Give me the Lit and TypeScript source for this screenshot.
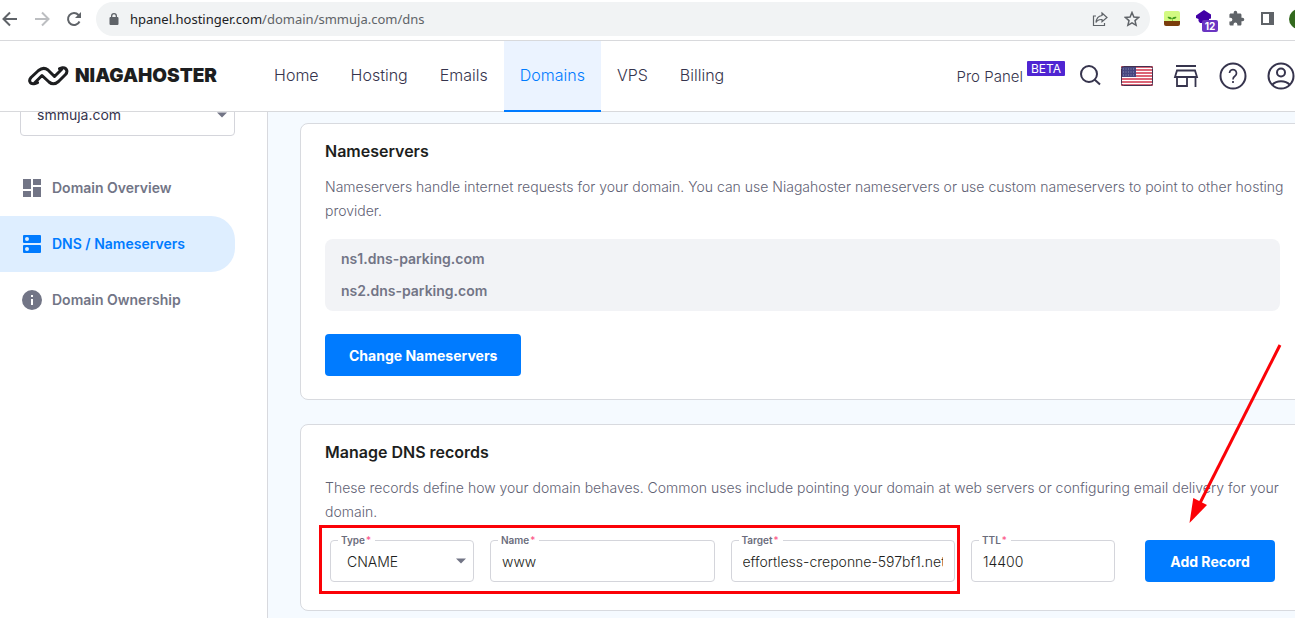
import { LitElement, html, css } from "lit";
import { customElement, property } from "lit/decorators.js";

@customElement("dns-field")
class DnsField extends LitElement {
  @property() label = "";
  @property() value = "";
  @property({ type: Boolean }) dropdown = false;

  static styles = css`
    :host {
      display: block;
      min-width: 0;
    }
    .field {
      position: relative;
      height: 42px;
      box-sizing: border-box;
      border: 1px solid #d4d5db;
      border-radius: 4px;
      display: flex;
      align-items: center;
      padding: 0 11px;
      background: #fff;
    }
    .field.dropdown {
      padding: 0 0 0 16px;
    }
    .label {
      position: absolute;
      top: -7px;
      left: 7px;
      padding: 0 4px 0 3px;
      background: #fff;
      font-size: 10px;
      line-height: 12px;
      font-weight: 600;
      color: #6b6d7c;
      white-space: nowrap;
    }
    .star {
      margin-left: 1px;
      font-weight: 400;
      color: #fc5185;
    }
    .control {
      flex: 1;
      min-width: 0;
      width: 100%;
      height: 100%;
      margin: 0;
      padding: 0;
      border: 0;
      outline: 0;
      background: transparent;
      appearance: none;
      font: inherit;
      font-size: 14px;
      font-weight: 300;
      color: #1d1e20;
    }
    .caret {
      position: absolute;
      right: 7px;
      pointer-events: none;
    }
  `;

  render() {
    return html`<div class="field ${this.dropdown ? "dropdown" : ""}">
      ${this.dropdown
        ? html`<select id="control" class="control">
              <option>${this.value}</option>
            </select>
            <svg class="caret" width="10" height="6" viewBox="0 0 10 6">
              <path d="M0 0.5h10L5 5.5z" fill="#727586" />
            </svg>`
        : html`<input id="control" class="control" type="text" .value=${this.value} />`}
      <label class="label" for="control">${this.label}<span class="star">*</span></label>
    </div>`;
  }
}

const icon = (name: string) => {
  switch (name) {
    case "overview":
      return html`<svg width="20" height="20" viewBox="0 0 20 20" fill="currentColor">
        <path d="M1 1h8v10H1zM11 1h8v6h-8zM11 9h8v10h-8zM1 13h8v6H1z" />
      </svg>`;
    case "dns":
      return html`<svg width="20" height="20" viewBox="0 0 20 20" fill="currentColor">
        <path
          fill-rule="evenodd"
          d="M2 1h16a1 1 0 0 1 1 1v6a1 1 0 0 1-1 1H2a1 1 0 0 1-1-1V2a1 1 0 0 1 1-1zM5 3a2 2 0 1 0 0 4a2 2 0 0 0 0-4zM2 11h16a1 1 0 0 1 1 1v6a1 1 0 0 1-1 1H2a1 1 0 0 1-1-1v-6a1 1 0 0 1 1-1zM5 13a2 2 0 1 0 0 4a2 2 0 0 0 0-4z"
        />
      </svg>`;
    default:
      return html`<svg width="20" height="20" viewBox="0 0 20 20" fill="currentColor">
        <path fill-rule="evenodd" d="M10 0a10 10 0 1 0 0 20a10 10 0 0 0 0-20zM9 5h2v2H9zM9 9h2v6H9z" />
      </svg>`;
  }
};

@customElement("app-root")
class AppRoot extends LitElement {
  private nav = ["Home", "Hosting", "Emails", "Domains", "VPS", "Billing"];
  private side = [
    { label: "Domain Overview", icon: "overview" },
    { label: "DNS / Nameservers", icon: "dns" },
    { label: "Domain Ownership", icon: "info" },
  ];

  static styles = css`
    :host {
      display: flex;
      flex-direction: column;
      height: 100vh;
      overflow: hidden;
      font-family: "Inter", "Liberation Sans", sans-serif;
      font-size: 14px;
      color: #36344d;
      background: #fff;
    }
    * {
      box-sizing: border-box;
    }
    svg {
      display: block;
      flex: none;
    }
    button {
      font-family: inherit;
      border: 0;
      margin: 0;
      padding: 0;
      background: none;
      color: inherit;
      cursor: pointer;
    }
    a {
      color: inherit;
      text-decoration: none;
    }

    .browser {
      flex: none;
      height: 41px;
      display: flex;
      align-items: center;
      padding: 0 0 3px 2px;
      border-bottom: 1px solid #d8d9dc;
      color: #5f6368;
    }
    .tools {
      display: flex;
      gap: 16px;
      margin-right: 14px;
    }
    .faded {
      color: #bcbec1;
    }
    .omnibox {
      flex: 1;
      min-width: 0;
      height: 34px;
      display: flex;
      align-items: center;
      padding: 0 10px 0 12px;
      border-radius: 17px;
      background: #f1f3f4;
    }
    .url {
      flex: 1;
      min-width: 0;
      margin-left: 10px;
      font-family: "Noto Sans", "Open Sans", sans-serif;
      font-size: 13px;
      line-height: 20px;
      color: #5f6368;
      white-space: nowrap;
    }
    .host {
      color: #202124;
    }
    .omni-actions {
      display: flex;
      gap: 16px;
    }
    .extensions {
      display: flex;
      align-items: center;
      margin-left: 14px;
      gap: 15px;
    }
    .ext-purple {
      position: relative;
    }
    .count {
      position: absolute;
      left: 6px;
      top: 10px;
      width: 16px;
      height: 12px;
      border-radius: 2px;
      background: #6a35c2;
      color: #fff;
      font-size: 10px;
      line-height: 12px;
      font-weight: 700;
      text-align: center;
    }
    .avatar {
      flex: none;
      width: 20px;
      height: 20px;
      border-radius: 50%;
      background: #33691e;
      margin-right: -14px;
      margin-left: -1px;
    }

    .header {
      flex: none;
      height: 71px;
      display: flex;
      align-items: stretch;
      border-bottom: 1px solid #d8d9dc;
    }
    .brand {
      display: flex;
      align-items: center;
      gap: 6px;
      margin-left: 28px;
      margin-right: 41px;
      font-weight: 900;
      font-size: 19px;
      line-height: 24px;
      color: #1d1e20;
    }
    .nav {
      flex: 1;
      display: flex;
    }
    .nav a {
      display: flex;
      align-items: center;
      padding: 0 16px 2px;
      margin-bottom: -1px;
      font-size: 16px;
      font-weight: 300;
      border-bottom: 2px solid transparent;
      white-space: nowrap;
    }
    .nav a.active {
      color: #007bff;
      background: #ebf3ff;
      border-bottom-color: #007bff;
    }
    .user {
      display: flex;
      align-items: center;
      color: #36344d;
    }
    .pro {
      display: flex;
      align-items: center;
      font-size: 15px;
      font-weight: 300;
      margin-right: 14px;
    }
    .beta {
      align-self: flex-start;
      margin-left: 4px;
      margin-top: -6px;
      height: 15px;
      padding: 0 4px;
      border-radius: 1px;
      background: #4f25d2;
      color: #fff;
      font-size: 12px;
      font-weight: 400;
      line-height: 15px;
    }
    .actions {
      display: flex;
      align-items: center;
      gap: 20px;
    }

    .body {
      flex: 1;
      min-height: 0;
      display: flex;
      overflow: hidden;
    }
    .sidebar {
      flex: none;
      width: 268px;
      border-right: 1px solid #d8d9de;
      padding-right: 32px;
    }
    .domain {
      position: relative;
      margin: -18px 0 24px 20px;
      height: 42px;
    }
    .domain select {
      appearance: none;
      width: 100%;
      height: 100%;
      padding: 0 16px 2px;
      border: 1px solid #d4d5db;
      border-radius: 4px;
      background: #fff;
      font: inherit;
      color: #36344d;
    }
    .domain svg {
      position: absolute;
      right: 8px;
      top: 18px;
      pointer-events: none;
    }
    .side-link {
      display: flex;
      align-items: center;
      gap: 10px;
      height: 56px;
      padding-left: 22px;
      border-radius: 0 24px 24px 0;
      color: #727586;
      font-weight: 600;
      line-height: 20px;
      white-space: nowrap;
    }
    .side-link.active {
      background: #deeeff;
      color: #007bff;
    }

    .main {
      flex: 1;
      min-width: 0;
      padding: 11px 0 0 32px;
      background: #f5faff;
      display: flex;
      flex-direction: column;
      gap: 24px;
    }
    .card {
      flex: none;
      margin-right: -10px;
      padding: 15px 24px 23px;
      border: 1px solid #d8dadf;
      border-radius: 8px;
      background: #fff;
    }
    h2 {
      margin: 0 0 12px;
      font-size: 16px;
      line-height: 24px;
      font-weight: 600;
      color: #1d1e20;
    }
    p {
      margin: 0 -8px 0 0;
      font-weight: 300;
      line-height: 24px;
      color: #5f6274;
    }
    .servers {
      margin: 16px 0 23px;
      padding: 4px 16px;
      list-style: none;
      border-radius: 8px;
      background: #f2f3f6;
      color: #727586;
      font-weight: 600;
      line-height: 32px;
    }
    .primary {
      height: 42px;
      padding: 0 24px;
      border-radius: 4px;
      background: #007bff;
      color: #fff;
      font-size: 14px;
      font-weight: 700;
      white-space: nowrap;
    }
    .records {
      position: relative;
      display: grid;
      grid-template-columns: 144px minmax(0, 1fr) minmax(0, 1fr) 144px 144px;
      column-gap: 16px;
      margin: 16px 5px 5px;
    }
    .records .primary {
      margin-left: 14px;
    }
    .frame {
      position: absolute;
      grid-column: 1 / 4;
      grid-row: 1;
      inset: -15px -5px -12px -11px;
      border: 3px solid #fb0207;
      pointer-events: none;
    }
    .arrow {
      position: absolute;
      right: -9px;
      bottom: 57px;
      pointer-events: none;
    }
  `;

  private caret() {
    return html`<svg width="10" height="6" viewBox="0 0 10 6"><path d="M0 0.5h10L5 5.5z" fill="#727586" /></svg>`;
  }

  render() {
    return html`
      <div class="browser">
        <div class="tools">
          <svg width="16" height="16" viewBox="0 0 16 16" fill="none" stroke="currentColor" stroke-width="2"><path d="M15 8H2M8 1.500L1.500 8L8 14.500" /></svg>
          <svg class="faded" width="16" height="16" viewBox="0 0 16 16" fill="none" stroke="currentColor" stroke-width="2"><path d="M1 8h13M8 1.500L14.500 8L8 14.500" /></svg>
          <svg width="16" height="16" viewBox="0 0 16 16" fill="none" stroke="currentColor" stroke-width="2"><path d="M13.500 10.500A6 6 0 1 1 12.500 4L14 5.500" /><path d="M15 1v6H9z" fill="currentColor" stroke="none" /></svg>
        </div>
        <div class="omnibox">
          <svg width="12" height="14" viewBox="0 0 12 14"><path fill="#5f6368" fill-rule="evenodd" d="M3 5V4a3 3 0 0 1 6 0v1h.500A1.200 1.200 0 0 1 10.500 6v6a1.200 1.200 0 0 1-1 1h-7a1.200 1.200 0 0 1-1-1V6a1.200 1.200 0 0 1 1-1zM4.300 5h3.400V4a1.700 1.700 0 0 0-3.400 0z" /></svg>
          <div class="url"><span class="host">hpanel.hostinger.com</span>/domain/smmuja.com/dns</div>
          <div class="omni-actions">
            <svg width="16" height="16" viewBox="0 0 16 16" fill="none" stroke="currentColor" stroke-width="1.200"><path d="M4 5H1.500v9.500h11V12" /><path d="M10 2l5 4.500l-5 4.300V8.500C7 8.300 5 9.500 4 11.500C4.300 7.500 6.500 5 10 4.500z" /></svg>
            <svg width="16" height="16" viewBox="0 0 16 16" fill="none" stroke="currentColor" stroke-width="1.500"><path d="M8 1.500l1.900 4.500l4.800.4l-3.700 3.200l1.100 4.700L8 11.800l-4.100 2.500l1.100-4.700l-3.700-3.200l4.800-.4z" /></svg>
          </div>
        </div>
        <div class="extensions">
          <svg width="17" height="17" viewBox="0 0 17 17"><rect y="1" width="16" height="11" rx="2" fill="#d3fa82" /><path d="M0 11h16v3a2 2 0 0 1-2 2H2a2 2 0 0 1-2-2z" fill="#7a3d0c" /><path d="M8 11V9C6 9.500 4.500 9 3.500 7C6 6.500 7.500 7.500 8 9c.500-1.500 2-2.500 4.500-2c-.5 1.500-2 2.200-4 2v2z" fill="#3f9b1c" /></svg>
          <div class="ext-purple">
            <svg width="17" height="17" viewBox="0 0 17 17"><path d="M8 0l7 4.500v4L13 9v4H4L2.500 11V9L0 8V5.500z" fill="#4200a6" /></svg>
            <span class="count">12</span>
          </div>
          <svg width="17" height="17" viewBox="0 0 24 24" fill="#5f6368"><path d="M20.500 11H19V7c0-1.100-.9-2-2-2h-4V3.500a2.500 2.500 0 0 0-5 0V5H4c-1.100 0-2 .9-2 2v3.800h1.500a2.700 2.700 0 0 1 0 5.400H2V20c0 1.100.9 2 2 2h3.800v-1.500a2.700 2.700 0 0 1 5.400 0V22H17c1.100 0 2-.9 2-2v-4h1.500a2.500 2.500 0 0 0 0-5z" /></svg>
          <svg width="15" height="15" viewBox="0 0 15 15"><path d="M2 2h11v11H2z" fill="none" stroke="#5f6368" stroke-width="2" /><path d="M9 1h5v13H9z" fill="#5f6368" /></svg>
          <span class="avatar"></span>
        </div>
      </div>

      <header class="header">
        <a class="brand" href="#">
          <svg width="41" height="20" viewBox="0 0 41 20" fill="none" stroke="#1d1e20" stroke-width="3" stroke-linecap="round" stroke-linejoin="round">
            <path d="M9.500 16.500L7 17.500Q3 18.500 1.800 15.500Q1.200 13.500 3 11.500L10.500 4.500Q15.500 .5 20 4L26.500 10.500L33.500 3.500" />
            <path d="M31.500 2.700L34.500 1.800Q38 1.500 38.800 4.500Q39.300 6.500 37.500 8.500L30.500 15.500Q25.500 19.800 21 16L14 9.500L7 16.500" />
          </svg>
          <span>NIAGAHOSTER</span>
        </a>
        <nav class="nav">
          ${this.nav.map((n) => html`<a href="#" class=${n === "Domains" ? "active" : ""}>${n}</a>`)}
        </nav>
        <div class="user">
          <a class="pro" href="#"><span>Pro Panel</span><span class="beta">BETA</span></a>
          <div class="actions">
            <button aria-label="Search"><svg width="22" height="22" viewBox="0 0 22 22" fill="none" stroke="currentColor" stroke-width="2"><circle cx="10" cy="9" r="8" /><path d="M15.500 14.500L21 19.500" /></svg></button>
            <button aria-label="Language"><svg width="32" height="20" viewBox="0 0 32 20"><rect width="32" height="20" rx="2" fill="#fff" /><path d="M0 1h32M0 4h32M0 7h32M0 10h32M0 13h32M0 16h32M0 19h32" stroke="#d0334a" stroke-width="1.600" /><path d="M1 1h14v10H1z" fill="#46467f" /><path d="M2 3h12M2 6h12M2 9h12" stroke="#8f8fb5" stroke-dasharray="1 1.500" /><rect x=".5" y=".5" width="31" height="19" rx="2" fill="none" stroke="#45304f" /></svg></button>
            <button aria-label="Store"><svg width="26" height="24" viewBox="0 0 26 24" fill="none" stroke="currentColor" stroke-width="1.800"><path d="M3 2h20M4 6.500h18l2 6.500H2zM4 13v9h10v-9M22.500 13v10" /></svg></button>
            <button aria-label="Help"><svg width="28" height="28" viewBox="0 0 28 28" fill="none" stroke="currentColor" stroke-width="2"><circle cx="14" cy="14" r="12.500" /><path d="M10.500 11a3.500 3.500 0 1 1 5.500 3c-1.500 1-2 1.700-2 3.500M14 19v2" stroke-width="1.700" /></svg></button>
            <button aria-label="Account"><svg width="28" height="28" viewBox="0 0 28 28" fill="none" stroke="currentColor" stroke-width="2"><circle cx="14" cy="14" r="12.500" /><circle cx="14" cy="10.500" r="4" /><path d="M5.500 22.500c4-4.500 13-4.500 17 0" /></svg></button>
          </div>
        </div>
      </header>

      <div class="body">
        <aside class="sidebar">
          <div class="domain">
            <select aria-label="Domain"><option>smmuja.com</option></select>
            ${this.caret()}
          </div>
          ${this.side.map(
            (s) => html`<a href="#" class="side-link ${s.icon === "dns" ? "active" : ""}">${icon(s.icon)}<span>${s.label}</span></a>`,
          )}
        </aside>
        <main class="main">
          <section class="card">
            <h2>Nameservers</h2>
            <p>Nameservers handle internet requests for your domain. You can use Niagahoster nameservers or use custom nameservers to point to other hosting provider.</p>
            <ul class="servers"><li>ns1.dns-parking.com</li><li>ns2.dns-parking.com</li></ul>
            <button class="primary">Change Nameservers</button>
          </section>
          <section class="card">
            <h2>Manage DNS records</h2>
            <p>These records define how your domain behaves. Common uses include pointing your domain at web servers or configuring email delivery for your domain.</p>
            <form class="records">
              <dns-field label="Type" value="CNAME" dropdown></dns-field>
              <dns-field label="Name" value="www"></dns-field>
              <dns-field label="Target" value="effortless-creponne-597bf1.netlify.app"></dns-field>
              <dns-field label="TTL" value="14400"></dns-field>
              <button class="primary" type="button">Add Record</button>
              <div class="frame"></div>
              <svg class="arrow" width="96" height="182" viewBox="0 0 96 182"><path d="M92 2L12 160" stroke="#fb0207" stroke-width="3" /><path d="M1.500 180L5.300 155L19 162z" fill="#fb0207" /></svg>
            </form>
          </section>
        </main>
      </div>
    `;
  }
}
